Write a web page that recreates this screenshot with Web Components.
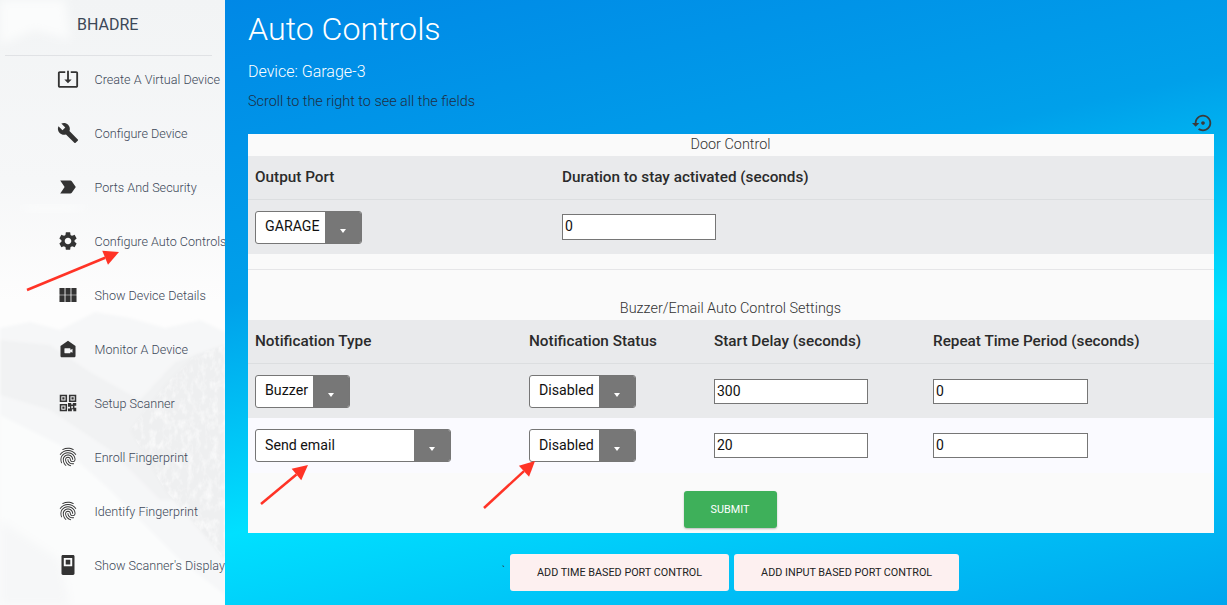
<!DOCTYPE html>
<html>
<head>
<meta charset="utf-8">
<style>
  html, body { margin: 0; height: 100%; overflow: hidden; font-family: 'Roboto', sans-serif; }
</style>
</head>
<body>
<app-shell>
  <side-bar slot="nav" brand="BHADRE">
    <nav-item icon="update" label="Create A Virtual Device"></nav-item>
    <nav-item icon="build" label="Configure Device"></nav-item>
    <nav-item icon="label" label="Ports And Security"></nav-item>
    <nav-item icon="settings" label="Configure Auto Controls"></nav-item>
    <nav-item icon="grid" label="Show Device Details"></nav-item>
    <nav-item icon="home" label="Monitor A Device"></nav-item>
    <nav-item icon="qr" label="Setup Scanner"></nav-item>
    <nav-item icon="finger" label="Enroll Fingerprint"></nav-item>
    <nav-item icon="finger" label="Identify Fingerprint"></nav-item>
    <nav-item icon="display" label="Show Scanner's Display"></nav-item>
  </side-bar>
  <auto-controls></auto-controls>
</app-shell>

<script>
// Material icon paths used in the sidebar and the panel
const ICONS = {
  update: '<path d="M12 16.5l4-4h-3V3h-2v9.500H8l4 4zm9-13h-6v1.990h6v14.030H3V5.490h6V3.500H3c-1.100 0-2 .9-2 2v14c0 1.100.9 2 2 2h18c1.100 0 2-.9 2-2v-14c0-1.100-.9-2-2-2z"/>',
  build: '<path d="M22.7 19l-9.100-9.100c.9-2.300.4-5-1.500-6.900-2-2-5-2.400-7.400-1.300L9 6 6 9 1.600 4.700C.4 7.100.9 10.100 2.900 12.100c1.900 1.900 4.600 2.400 6.900 1.500l9.100 9.100c.4.4 1 .4 1.400 0l2.300-2.300c.5-.4.5-1.100.1-1.400z"/>',
  label: '<path d="M3.500 18.990l11 .01c.67 0 1.270-.33 1.630-.84L20.500 12l-4.370-6.160c-.36-.51-.96-.84-1.630-.84l-11 .01L8.340 12 3.500 18.990z"/>',
  settings: '<path d="M19.140 12.940c.04-.3.06-.61.06-.94 0-.32-.02-.64-.07-.94l2.030-1.580c.18-.14.23-.41.12-.61l-1.920-3.320c-.12-.22-.37-.29-.59-.22l-2.390.96c-.5-.38-1.030-.7-1.620-.94l-.36-2.540c-.04-.24-.24-.41-.48-.41h-3.840c-.24 0-.43.17-.47.41l-.36 2.540c-.59.24-1.130.57-1.620.94l-2.390-.96c-.22-.08-.47 0-.59.22L2.740 8.870c-.12.21-.08.47.12.61l2.030 1.580c-.05.3-.09.63-.09.94s.02.64.07.94l-2.030 1.580c-.18.14-.23.41-.12.61l1.920 3.320c.12.22.37.29.59.22l2.390-.96c.5.38 1.030.7 1.620.94l.36 2.540c.05.24.24.41.48.41h3.840c.24 0 .44-.17.47-.41l.36-2.540c.59-.24 1.130-.56 1.620-.94l2.390.96c.22.08.47 0 .59-.22l1.920-3.320c.12-.22.07-.47-.12-.61l-2.010-1.580zM12 15.600c-1.980 0-3.600-1.620-3.600-3.600s1.620-3.600 3.600-3.600 3.600 1.620 3.600 3.600-1.620 3.600-3.600 3.600z"/>',
  grid: '<path d="M2.700 4.300h5.600v7.300H2.700zM9.200 4.300h5.600v7.300H9.200zM15.700 4.300h5.600v7.300h-5.600zM2.700 12.400h5.600v7.300H2.700zM9.200 12.400h5.600v7.300H9.200zM15.700 12.400h5.600v7.300h-5.600z"/>',
  home: '<path fill-rule="evenodd" d="M12 3l8.200 5.800v10.700c0 .8-.7 1.500-1.500 1.500H5.300c-.8 0-1.500-.7-1.500-1.500V8.800L12 3zM8.600 11.300c-.3 0-.5.2-.5.5v4.400c0 .3.2.5.500.5h5.600c.3 0 .5-.2.5-.5v-1.300l2.200 1.300v-4.500l-2.200 1.300v-1.200c0-.3-.2-.5-.5-.5H8.600z"/>',
  qr: '<path fill-rule="evenodd" d="M3 3h8v8H3V3zm1.700 1.700v4.600h4.600V4.700H4.700zM5.800 5.800h2.400v2.400H5.800V5.800zM13 3h8v8h-8V3zm1.700 1.700v4.600h4.600V4.700h-4.600zM15.800 5.800h2.400v2.400h-2.400V5.800zM3 13h8v8H3v-8zm1.700 1.700v4.600h4.600v-4.600H4.700zM5.800 15.800h2.400v2.400H5.800v-2.400zM12 12h3.500v1.700h1.800V12H21v3h-2v2.200h2V21h-3.200v-2.200h-1.600V21H12v-3h2.200v-2H12v-4zm3.600 3.400v2.400h1.700v-2.400h-1.700z"/>',
  finger: '<path d="M17.810 4.470c-.08 0-.16-.02-.23-.06C15.660 3.420 14 3 12.010 3c-1.980 0-3.860.47-5.570 1.410-.24.13-.54.04-.68-.2-.13-.24-.04-.55.2-.68C7.820 2.520 9.860 2 12.010 2c2.130 0 3.990.47 6.030 1.520.25.13.34.43.21.67-.09.18-.26.28-.44.28zM3.500 9.720c-.1 0-.2-.03-.29-.09-.23-.16-.28-.47-.12-.7.99-1.400 2.250-2.500 3.750-3.270C9.980 4.040 14 4.030 17.150 5.650c1.500.77 2.760 1.860 3.750 3.250.16.22.11.54-.12.7-.23.16-.54.11-.7-.12-.9-1.260-2.040-2.250-3.390-2.940-2.870-1.470-6.540-1.470-9.400.01-1.360.7-2.500 1.700-3.400 2.960-.08.14-.23.21-.39.21zm6.250 12.070c-.13 0-.26-.05-.35-.15-.87-.87-1.340-1.430-2.010-2.640-.69-1.230-1.050-2.730-1.050-4.340 0-2.970 2.540-5.390 5.660-5.390s5.660 2.420 5.660 5.390c0 .28-.22.5-.5.5s-.5-.22-.5-.5c0-2.420-2.090-4.390-4.660-4.390-2.570 0-4.660 1.970-4.660 4.390 0 1.440.32 2.770.93 3.850.64 1.150 1.080 1.640 1.850 2.420.19.2.19.51 0 .71-.11.1-.24.15-.37.15zm7.170-1.850c-1.190 0-2.240-.3-3.100-.89-1.490-1.010-2.380-2.650-2.380-4.390 0-.28.22-.5.5-.5s.5.22.5.5c0 1.410.72 2.740 1.940 3.560.71.48 1.540.71 2.540.71.24 0 .64-.03 1.040-.1.27-.05.53.13.58.41.05.27-.13.53-.41.58-.57.11-1.070.12-1.210.12zM14.910 22c-.04 0-.09-.01-.13-.02-1.590-.44-2.630-1.030-3.720-2.100-1.400-1.390-2.170-3.240-2.170-5.220 0-1.620 1.380-2.940 3.080-2.940 1.700 0 3.080 1.320 3.080 2.940 0 1.070.93 1.940 2.080 1.940s2.080-.87 2.080-1.940c0-3.770-3.250-6.830-7.250-6.830-2.840 0-5.440 1.580-6.610 4.030-.39.81-.59 1.760-.59 2.800 0 .78.07 2.010.67 3.610.1.26-.03.55-.29.64-.26.1-.55-.04-.64-.29-.49-1.310-.73-2.610-.73-3.960 0-1.200.23-2.290.68-3.240 1.330-2.790 4.280-4.600 7.510-4.600 4.550 0 8.250 3.510 8.250 7.830 0 1.620-1.380 2.940-3.080 2.940s-3.080-1.320-3.080-2.940c0-1.070-.93-1.940-2.080-1.940s-2.080.87-2.080 1.940c0 1.710.66 3.310 1.870 4.510.95.94 1.860 1.460 3.270 1.850.27.07.42.35.35.61-.05.23-.26.38-.47.38z"/>',
  display: '<path fill-rule="evenodd" d="M6.400 1.100h11.200c.8 0 1.500.7 1.500 1.500v18.800c0 .8-.7 1.500-1.500 1.500H6.400c-.8 0-1.500-.7-1.500-1.500V2.600c0-.8.7-1.500 1.500-1.500zM7.400 4.400v9h9.200v-9H7.400zM9.500 6.400h5v5h-5v-5z"/>',
  restore: '<path d="M14 12c0-1.100-.9-2-2-2s-2 .9-2 2 .9 2 2 2 2-.9 2-2zm-2-9c-4.970 0-9 4.030-9 9H0l4 4 4-4H5c0-3.870 3.130-7 7-7s7 3.130 7 7-3.130 7-7 7c-1.510 0-2.910-.49-4.060-1.300l-1.420 1.440C8.040 20.300 9.940 21 12 21c4.970 0 9-4.030 9-9s-4.030-9-9-9z"/>'
};

// Page frame: sidebar on the left, gradient main area on the right
class AppShell extends HTMLElement {
  constructor() {
    super();
    this.attachShadow({ mode: 'open' });
    this.shadowRoot.innerHTML = `
      <style>
        :host {
          display: grid;
          grid-template-columns: 225px 1fr;
          height: 605px;
          width: 1227px;
          overflow: hidden;
        }
      </style>
      <slot name="nav"></slot>
      <slot></slot>
    `;
  }
}

// Sidebar with the faded mountain backdrop
class SideBar extends HTMLElement {
  constructor() {
    super();
    this.attachShadow({ mode: 'open' });
  }
  connectedCallback() {
    this.shadowRoot.innerHTML = `
      <style>
        :host {
          display: block;
          position: relative;
          height: 605px;
          overflow: hidden;
          background: #fbfbfc;
          z-index: 1;
        }
        .bg { position: absolute; inset: 0; width: 225px; height: 605px; }
        .content { position: relative; }
        .brand {
          height: 48px;
          display: flex;
          align-items: center;
          padding-left: 77px;
          font-size: 16px;
          color: #3c4858;
        }
        hr {
          margin: 7px 13px 0 5px;
          border: 0;
          height: 1px;
          background: #e0e2e5;
        }
        .items { margin-top: -4px; }
      </style>
      <svg class="bg" viewBox="0 0 225 605" aria-hidden="true">
        <defs>
          <linearGradient id="sky" x1="0" y1="0" x2="0" y2="1">
            <stop offset="0" stop-color="#f2f4f5"/>
            <stop offset=".3" stop-color="#f6f7f8"/>
            <stop offset=".5" stop-color="#fdfdfd"/>
            <stop offset="1" stop-color="#fdfdfd"/>
          </linearGradient>
          <filter id="soft"><feGaussianBlur stdDeviation="5"/></filter>
          <filter id="soft2"><feGaussianBlur stdDeviation="1.500"/></filter>
          <filter id="rock" x="0" y="0" width="100%" height="100%">
            <feTurbulence type="fractalNoise" baseFrequency=".16 .1" numOctaves="3" seed="4"/>
            <feColorMatrix values="0 0 0 0 1  0 0 0 0 1  0 0 0 0 1  2.400 0 0 0 -1.050"/>
            <feComposite in2="SourceGraphic" operator="in"/>
          </filter>
        </defs>
        <rect width="225" height="605" fill="url(#sky)"/>
        <path d="M0 0H65L70 40 35 30 0 45Z" fill="#fbfcfc" filter="url(#soft)"/>
        <path d="M20 205H90L70 212 30 212Z" fill="#fbfcfc" filter="url(#soft)"/>
        <g filter="url(#soft2)">
          <path d="M0 328L30 322 60 330 95 312 130 318 165 328 200 320 225 332V605H0Z" fill="#f6f7f8"/>
          <path d="M0 340L50 345 90 372 140 400 175 362 225 345V500H160L110 450 50 410 0 395Z" fill="#f1f2f3"/>
          <path d="M130 430L165 385 195 355 225 345V560L200 530 165 490Z" fill="#eeeff0"/>
        </g>
        <path d="M130 430L165 385 195 355 225 345V560L200 530 165 490Z" fill="#fff" filter="url(#rock)" opacity=".7"/>
        <path d="M0 415L60 445 110 490 180 560 225 595V605H0Z" fill="#fbfcfc" filter="url(#soft2)"/>
        <path d="M0 520L60 560 70 605H0Z" fill="#f6f7f8" filter="url(#soft)"/>
      </svg>
      <div class="content">
        <div class="brand">${this.getAttribute('brand')}</div>
        <hr>
        <div class="items"><slot></slot></div>
      </div>
    `;
  }
}

class NavItem extends HTMLElement {
  constructor() {
    super();
    this.attachShadow({ mode: 'open' });
  }
  connectedCallback() {
    this.shadowRoot.innerHTML = `
      <style>
        :host {
          display: flex;
          align-items: center;
          height: 54px;
          padding-left: 56.500px;
          white-space: nowrap;
        }
        svg { width: 22px; height: 22px; fill: #333; flex: none; }
        span {
          margin-left: 16px;
          font-size: 12.600px;
          font-weight: 300;
          color: #3c4858;
        }
      </style>
      <svg viewBox="0 0 24 24">${ICONS[this.getAttribute('icon')]}</svg>
      <span>${this.getAttribute('label')}</span>
    `;
  }
}

// Select look-alike: white label box plus grey caret button
class DropSelect extends HTMLElement {
  constructor() {
    super();
    this.attachShadow({ mode: 'open' }).innerHTML = `
      <style>
        :host {
          display: inline-flex;
          box-sizing: border-box;
          height: 33px;
          border: 1px solid #767676;
          border-radius: 3px;
          overflow: hidden;
          background: #fff;
          font-size: 14.200px;
          color: #111;
          vertical-align: top;
        }
        .val { flex: 1; min-width: 0; padding-left: 9px; line-height: 28px; white-space: nowrap; }
        :host([low]) .val { line-height: 30px; }
        .btn {
          flex: none;
          width: 36px;
          background: #777;
          display: flex;
          justify-content: center;
          align-items: center;
          padding-top: 6px;
          box-sizing: border-box;
        }
        .btn i {
          width: 0;
          height: 0;
          border: 3.500px solid transparent;
          border-top: 4px solid #fff;
          border-bottom: 0;
        }
      </style>
      <div class="val"><slot></slot></div>
      <div class="btn"><i></i></div>
    `;
  }
}

class NumField extends HTMLElement {
  constructor() {
    super();
    this.attachShadow({ mode: 'open' }).innerHTML = `
      <style>
        :host { display: inline-block; vertical-align: top; }
        input {
          display: block;
          box-sizing: border-box;
          width: 154px;
          height: 25px;
          margin: 0;
          padding: 0 2px 2px;
          border: 1.300px solid #767676;
          border-radius: 0;
          background: #fff;
          font: 14px 'Roboto', sans-serif;
          color: #111;
        }
      </style>
      <input type="text">
    `;
  }
  connectedCallback() {
    const input = this.shadowRoot.querySelector('input');
    input.setAttribute('value', this.getAttribute('value'));
    if (this.hasAttribute('width')) input.style.width = this.getAttribute('width') + 'px';
    if (this.hasAttribute('height')) input.style.height = this.getAttribute('height') + 'px';
  }
}

// Flat raised button, green for submit and pale pink for the port actions
class ActionButton extends HTMLElement {
  constructor() {
    super();
    this.attachShadow({ mode: 'open' }).innerHTML = `
      <style>
        :host {
          display: inline-flex;
          align-items: center;
          justify-content: center;
          box-sizing: border-box;
          height: 37px;
          border-radius: 3px;
          font-size: 10.800px;
          background: var(--btn-bg, #fdf0f0);
          color: var(--btn-fg, #222);
          box-shadow: var(--btn-shadow, none);
          white-space: nowrap;
        }
      </style>
      <slot></slot>
    `;
  }
}

// Grid-based row used by both settings tables
class TableRow extends HTMLElement {
  constructor() {
    super();
    this.attachShadow({ mode: 'open' }).innerHTML = `
      <style>
        :host {
          display: grid;
          box-sizing: border-box;
          grid-template-columns: var(--cols);
          padding-left: 7px;
          align-items: start;
        }
        :host([head]) {
          height: 44px;
          padding-bottom: 2px;
          align-items: center;
          background: #e9eaec;
          border-bottom: 1px solid #dcdee0;
          font-size: 15.300px;
          font-weight: 500;
          color: #2b2b2b;
        }
        :host([tint]) { background: #e9eaec; height: 54px; padding-top: 11px; }
        :host([pale]) { background: #fafaff; height: 55px; padding-top: 11px; }
      </style>
      <slot></slot>
    `;
  }
}

class AutoControls extends HTMLElement {
  constructor() {
    super();
    this.attachShadow({ mode: 'open' }).innerHTML = `
      <style>
        :host {
          display: block;
          position: relative;
          height: 605px;
          box-sizing: border-box;
          padding-left: 23px;
          background: linear-gradient(167deg, #0088e6 0%, #00a0ea 36%, #00e0ff 64%, #00a5ee 100%);
          overflow: hidden;
        }
        h1 {
          margin: 0;
          padding-top: 10px;
          height: 50px;
          box-sizing: border-box;
          font-size: 32.200px;
          line-height: 38px;
          font-weight: 300;
          color: #fff;
        }
        .device {
          margin-top: 10px;
          height: 24px;
          line-height: 24px;
          font-size: 16px;
          font-weight: 300;
          color: #fff;
        }
        .hint {
          margin-top: 8px;
          height: 20px;
          line-height: 20px;
          font-size: 14.400px;
          font-weight: 300;
          color: #1f2f44;
        }
        .reset {
          height: 23px;
          padding-right: 13px;
          display: flex;
          justify-content: flex-end;
          align-items: center;
          margin-top: -1px;
        }
        .reset svg { width: 22px; height: 22px; fill: #3a3a3a; }
        .card {
          width: 966px;
          height: 399px;
          background: #fafafa;
          display: flex;
          flex-direction: column;
        }
        .caption {
          text-align: center;
          font-size: 14.400px;
          font-weight: 300;
          color: #333;
          height: 22px;
          line-height: 21px;
          padding-right: 1px;
        }
        .gap {
          height: 15px;
          border-bottom: 1px solid #e6e6e8;
        }
        .caption.two {
          margin-top: 28px;
          height: 22px;
        }
        .submit { display: flex; justify-content: center; margin-top: 18px; padding-right: 2px; }
        .submit action-button {
          width: 93px;
          --btn-bg: #3eb05a;
          --btn-fg: #fff;
          --btn-shadow: 0 1px 2px rgba(0,0,0,.25);
        }
        .actions {
          display: flex;
          justify-content: flex-start;
          gap: 5px;
          margin: 21px 0 0 262px;
          position: relative;
        }
        .tick { position: absolute; left: -8px; top: 11px; font-size: 10px; color: #333; }
        .actions action-button { padding: 0 27px; }
        .one { --cols: 307px 1fr; }
        .two-t { --cols: 274px 185px 219px 1fr; }
      </style>
      <h1>Auto Controls</h1>
      <div class="device">Device: Garage-3</div>
      <div class="hint">Scroll to the right to see all the fields</div>
      <div class="reset"><svg viewBox="0 0 24 24">${ICONS.restore}</svg></div>
      <div class="card">
        <div class="caption">Door Control</div>
        <div class="one">
          <table-row head><span>Output Port</span><span>Duration to stay activated (seconds)</span></table-row>
          <table-row tint><drop-select style="width:107px">GARAGE</drop-select><num-field value="0" height="26" style="margin-top:3px"></num-field></table-row>
        </div>
        <div class="gap"></div>
        <div class="caption two">Buzzer/Email Auto Control Settings</div>
        <div class="two-t">
          <table-row head><span>Notification Type</span><span>Notification Status</span><span>Start Delay (seconds)</span><span>Repeat Time Period (seconds)</span></table-row>
          <table-row tint><drop-select style="width:95px;justify-self:start">Buzzer</drop-select><drop-select style="width:107px;justify-self:start">Disabled</drop-select><num-field value="300" style="margin-top:4px"></num-field><num-field value="0" width="155" style="margin-top:4px"></num-field></table-row>
          <table-row pale><drop-select low style="width:196px;justify-self:start">Send email</drop-select><drop-select low style="width:107px;justify-self:start">Disabled</drop-select><num-field value="20" style="margin-top:4px"></num-field><num-field value="0" width="155" style="margin-top:4px"></num-field></table-row>
        </div>
        <div class="submit"><action-button>SUBMIT</action-button></div>
      </div>
      <div class="actions">
        <span class="tick">\`</span>
        <action-button>ADD TIME BASED PORT CONTROL</action-button>
        <action-button>ADD INPUT BASED PORT CONTROL</action-button>
      </div>
    `;
  }
}

// Red annotation arrows drawn over the whole screenshot
class RedArrows extends HTMLElement {
  constructor() {
    super();
    const arrow = (x1, y1, x2, y2) => {
      const a = Math.atan2(y2 - y1, x2 - x1), len = 15, w = 7.5;
      const bx = x2 - Math.cos(a) * len, by = y2 - Math.sin(a) * len;
      const nx = -Math.sin(a) * w, ny = Math.cos(a) * w;
      return `<line x1="${x1}" y1="${y1}" x2="${bx}" y2="${by}" stroke="#ff3326" stroke-width="2.500"/>
        <polygon fill="#ff3326" points="${x2},${y2} ${bx + nx},${by + ny} ${bx - nx},${by - ny}"/>`;
    };
    this.attachShadow({ mode: 'open' }).innerHTML = `
      <style>
        :host { position: absolute; left: 0; top: 0; z-index: 10; pointer-events: none; }
        svg { display: block; }
      </style>
      <svg width="1227" height="605">
        ${arrow(27, 290, 119, 252)}
        ${arrow(261, 504, 308, 465)}
        ${arrow(484, 508, 535, 461)}
      </svg>
    `;
  }
}

customElements.define('app-shell', AppShell);
customElements.define('side-bar', SideBar);
customElements.define('nav-item', NavItem);
customElements.define('drop-select', DropSelect);
customElements.define('num-field', NumField);
customElements.define('action-button', ActionButton);
customElements.define('table-row', TableRow);
customElements.define('auto-controls', AutoControls);
customElements.define('red-arrows', RedArrows);
document.body.appendChild(document.createElement('red-arrows'));
</script>
</body>
</html>
